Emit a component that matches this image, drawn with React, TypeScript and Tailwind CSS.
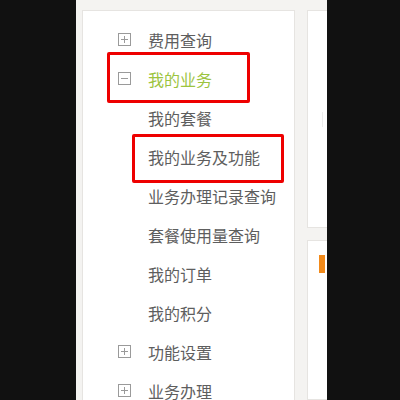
import React from "react";

const font = { fontFamily: '"Microsoft YaHei", "Noto Sans CJK SC", "Noto Sans", sans-serif' };

function PlusBox({ minus }: { minus?: boolean }) {
  return (
    <svg width="13" height="13" viewBox="0 0 13 13" className="shrink-0">
      <rect x="0.5" y="0.5" width="12" height="12" fill="none" stroke="#9a9a9a" strokeWidth="1" />
      <line x1="3" y1="6.5" x2="10" y2="6.5" stroke="#9a9a9a" strokeWidth="1" />
      {!minus && <line x1="6.5" y1="3" x2="6.5" y2="10" stroke="#9a9a9a" strokeWidth="1" />}
    </svg>
  );
}

type Row = { text: string; icon?: "plus" | "minus"; active?: boolean };

const rows: Row[] = [
  { text: "费用查询", icon: "plus" },
  { text: "我的业务", icon: "minus", active: true },
  { text: "我的套餐" },
  { text: "我的业务及功能" },
  { text: "业务办理记录查询" },
  { text: "套餐使用量查询" },
  { text: "我的订单" },
  { text: "我的积分" },
  { text: "功能设置", icon: "plus" },
  { text: "业务办理", icon: "plus" },
];

export default function App() {
  return (
    <div className="flex h-[400px] w-[400px] overflow-hidden bg-[#111111]" style={font}>
      <div className="w-[76px] shrink-0" />
      <div className="flex h-full w-[251px] shrink-0 gap-[12px] bg-[#f4f3f1] pl-[6px] pt-[10px]">
        <div className="relative h-[420px] w-[213px] shrink-0 border border-[#e6e4e1] bg-white pt-[9px]">
          {rows.map((r) => (
            <div key={r.text} className="flex h-[39px] items-center">
              <div className="flex w-[65px] shrink-0 justify-end pr-[17px]">
                {r.icon ? <PlusBox minus={r.icon === "minus"} /> : null}
              </div>
              <span
                className={`whitespace-nowrap text-[16px] leading-none ${
                  r.active ? "text-[#9cc43f]" : "text-[#5e5e5e]"
                }`}
              >
                {r.text}
              </span>
            </div>
          ))}
          <div className="absolute left-[24px] top-[41px] h-[51px] w-[143px] rounded-[2px] border-[3px] border-[#ee0000]" />
          <div className="absolute left-[49px] top-[123px] h-[49px] w-[152px] rounded-[2px] border-[3px] border-[#ee0000]" />
        </div>
        <div className="flex flex-1 flex-col gap-[12px]">
          <div className="relative h-[218px] border border-r-0 border-[#e6e4e1] bg-white">
            <div className="absolute left-[14px] top-[101px] h-[15px] w-px bg-[#ececec]" />
          </div>
          <div className="relative flex-1 border border-r-0 border-[#e6e4e1] bg-white">
            <div className="absolute left-[11px] top-[14px] h-[18px] w-[6px] bg-[#f28a1a]" />
          </div>
        </div>
      </div>
      <div className="flex-1" />
    </div>
  );
}
